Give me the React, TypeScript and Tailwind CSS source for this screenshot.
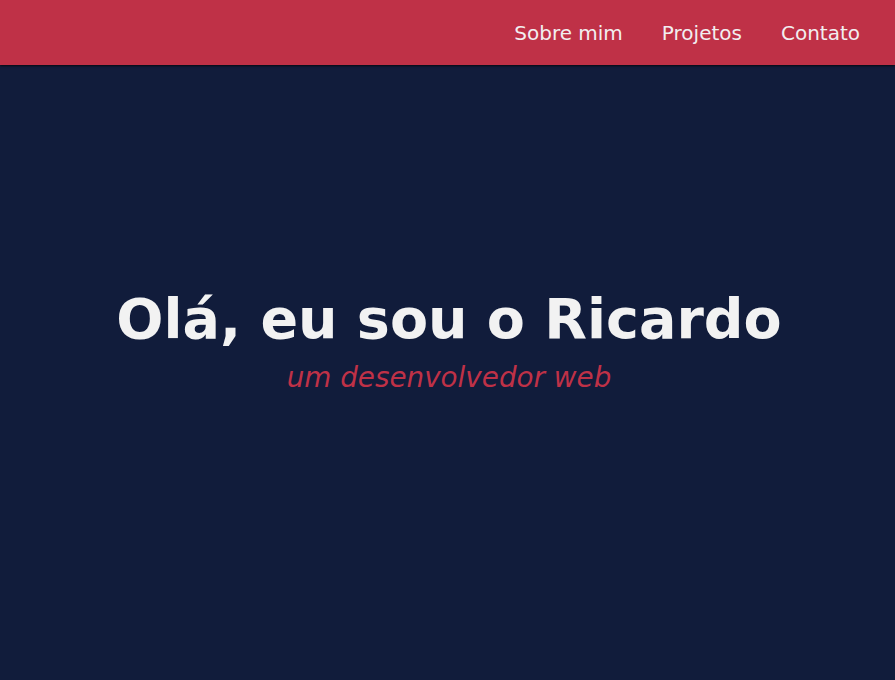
export default function App() {
  return (
    <div className="flex h-[680px] flex-col bg-[#111c3b]" style={{ fontFamily: '"DejaVu Sans", sans-serif' }}>
      <header className="relative z-10 flex h-[65px] shrink-0 items-center justify-end gap-[39px] bg-[#bf3147] pr-[35px] shadow-[0_1px_2px_rgba(0,0,0,0.7)]">
        <a className="text-[20px] text-[#f2eef0]">Sobre mim</a>
        <a className="text-[20px] text-[#f2eef0]">Projetos</a>
        <a className="text-[20px] text-[#f2eef0]">Contato</a>
      </header>
      <main className="flex flex-1 flex-col items-center justify-center pb-[65px] pl-[3px]">
        <h1 className="text-[55.5px] font-bold leading-[1.2] text-[#f2f2f2]">Olá, eu sou o Ricardo</h1>
        <p className="mt-[9px] text-[27.8px] italic leading-[1.2] text-[#bf3147]">um desenvolvedor web</p>
      </main>
    </div>
  );
}
